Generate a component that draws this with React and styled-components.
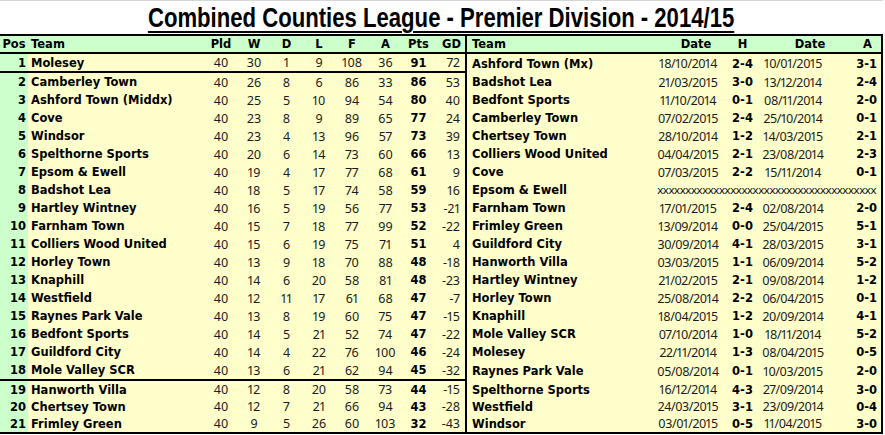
import React from 'react'
import styled, { createGlobalStyle } from 'styled-components'

const GREEN = '#ccffcc';
const CREAM = '#ffffcc';

const GlobalStyle = createGlobalStyle`
  body {
    margin: 0;
    background: #fff;
  }
`;

const Sheet = styled.div`
  width: 883px;
  font-family: "DejaVu Sans", "Liberation Sans", sans-serif;
  font-size: 11.5px;
  color: #000;
`;

const TitleBar = styled.div`
  height: 33px;
  border-top: 1px solid #d6d6d6;
  display: flex;
  justify-content: center;
`;

const Title = styled.h1`
  margin: 0;
  display: inline-block;
  font-family: "Liberation Sans", Arial, sans-serif;
  font-weight: 700;
  font-size: 28px;
  line-height: 33px;
  white-space: nowrap;
  transform: scaleX(0.79);
  text-decoration: underline;
  text-decoration-thickness: 2px;
  text-underline-offset: 4px;
`;

const Table = styled.div`
  border-top: 2px solid #000;
  border-right: 2px solid #000;
  border-bottom: 2px solid #000;
`;

const Row = styled.div`
  display: flex;
`;

const Left = styled.div`
  display: grid;
  grid-template-columns: 28px 176px 34px 32px 33px 32px 34px 33px 33px 30px;
  width: 465px;
  height: ${p => p.$h}px;
  background: ${p => (p.$head ? GREEN : CREAM)};
  border-bottom: ${p => (p.$rule ? '2px solid #000' : 'none')};
`;

const Right = styled.div`
  display: grid;
  grid-template-columns: 188px 72px 31px 74px 49px;
  flex: 1;
  background: ${p => (p.$head ? GREEN : CREAM)};
  border-left: 2px solid #000;
  border-bottom: ${p => (p.$rule ? '2px solid #000' : 'none')};
`;

const Cell = styled.div`
  display: flex;
  align-items: center;
  justify-content: ${p =>
    p.$align === 'left' ? 'flex-start' : p.$align === 'right' ? 'flex-end' : 'center'};
  padding-left: ${p => p.$pl || 0}px;
  padding-right: ${p => p.$pr || 0}px;
  font-weight: ${p => (p.$bold ? 700 : 400)};
  white-space: nowrap;
  overflow: hidden;
`;

const Num = styled(Cell)`
  font-family: "Noto Sans", "DejaVu Sans", sans-serif;
  font-size: 12.5px;
  font-variant-numeric: proportional-nums;
  color: #1a1a1a;
`;

const DateCell = styled(Num)`
  letter-spacing: -0.4px;
`;

const Pos = styled(Cell)`
  background: ${GREEN};
`;

const Crosses = styled.div`
  grid-column: 2 / 6;
  display: flex;
  align-items: center;
  padding-left: 2px;
  white-space: nowrap;
  font-size: 11px;
  letter-spacing: -0.9px;
  color: #1a1a1a;
`;

const table = [
  [1, 'Molesey', 40, 30, 1, 9, 108, 36, 91, 72],
  [2, 'Camberley Town', 40, 26, 8, 6, 86, 33, 86, 53],
  [3, 'Ashford Town (Middx)', 40, 25, 5, 10, 94, 54, 80, 40],
  [4, 'Cove', 40, 23, 8, 9, 89, 65, 77, 24],
  [5, 'Windsor', 40, 23, 4, 13, 96, 57, 73, 39],
  [6, 'Spelthorne Sports', 40, 20, 6, 14, 73, 60, 66, 13],
  [7, 'Epsom & Ewell', 40, 19, 4, 17, 77, 68, 61, 9],
  [8, 'Badshot Lea', 40, 18, 5, 17, 74, 58, 59, 16],
  [9, 'Hartley Wintney', 40, 16, 5, 19, 56, 77, 53, -21],
  [10, 'Farnham Town', 40, 15, 7, 18, 77, 99, 52, -22],
  [11, 'Colliers Wood United', 40, 15, 6, 19, 75, 71, 51, 4],
  [12, 'Horley Town', 40, 13, 9, 18, 70, 88, 48, -18],
  [13, 'Knaphill', 40, 14, 6, 20, 58, 81, 48, -23],
  [14, 'Westfield', 40, 12, 11, 17, 61, 68, 47, -7],
  [15, 'Raynes Park Vale', 40, 13, 8, 19, 60, 75, 47, -15],
  [16, 'Bedfont Sports', 40, 14, 5, 21, 52, 74, 47, -22],
  [17, 'Guildford City', 40, 14, 4, 22, 76, 100, 46, -24],
  [18, 'Mole Valley SCR', 40, 13, 6, 21, 62, 94, 45, -32],
  [19, 'Hanworth Villa', 40, 12, 8, 20, 58, 73, 44, -15],
  [20, 'Chertsey Town', 40, 12, 7, 21, 66, 94, 43, -28],
  [21, 'Frimley Green', 40, 9, 5, 26, 60, 103, 32, -43],
];

const results = [
  ['Ashford Town (Mx)', '18/10/2014', '2-4', '10/01/2015', '3-1'],
  ['Badshot Lea', '21/03/2015', '3-0', '13/12/2014', '2-4'],
  ['Bedfont Sports', '11/10/2014', '0-1', '08/11/2014', '2-0'],
  ['Camberley Town', '07/02/2015', '2-4', '25/10/2014', '0-1'],
  ['Chertsey Town', '28/10/2014', '1-2', '14/03/2015', '2-1'],
  ['Colliers Wood United', '04/04/2015', '2-1', '23/08/2014', '2-3'],
  ['Cove', '07/03/2015', '2-2', '15/11/2014', '0-1'],
  ['Epsom & Ewell'],
  ['Farnham Town', '17/01/2015', '2-4', '02/08/2014', '2-0'],
  ['Frimley Green', '13/09/2014', '0-0', '25/04/2015', '5-1'],
  ['Guildford City', '30/09/2014', '4-1', '28/03/2015', '3-1'],
  ['Hanworth Villa', '03/03/2015', '1-1', '06/09/2014', '5-2'],
  ['Hartley Wintney', '21/02/2015', '2-1', '09/08/2014', '1-2'],
  ['Horley Town', '25/08/2014', '2-2', '06/04/2015', '0-1'],
  ['Knaphill', '18/04/2015', '1-2', '20/09/2014', '4-1'],
  ['Mole Valley SCR', '07/10/2014', '1-0', '18/11/2014', '5-2'],
  ['Molesey', '22/11/2014', '1-3', '08/04/2015', '0-5'],
  ['Raynes Park Vale', '05/08/2014', '0-1', '10/03/2015', '2-0'],
  ['Spelthorne Sports', '16/12/2014', '4-3', '27/09/2014', '3-0'],
  ['Westfield', '24/03/2015', '3-1', '23/09/2014', '0-4'],
  ['Windsor', '03/01/2015', '0-5', '11/04/2015', '3-0'],
];

const rowHeight = pos => (pos === 1 ? 17 : pos > 18 ? 17 : 18);

export default function App() {
  return (
    <Sheet>
      <GlobalStyle />
      <TitleBar>
        <Title>Combined Counties League - Premier Division - 2014/15</Title>
      </TitleBar>
      <Table>
        <Row>
          <Left $head $rule $h={16}>
            <Cell $bold>Pos</Cell>
            <Cell $bold $align="left" $pl={3}>Team</Cell>
            <Cell $bold>Pld</Cell>
            <Cell $bold>W</Cell>
            <Cell $bold>D</Cell>
            <Cell $bold>L</Cell>
            <Cell $bold>F</Cell>
            <Cell $bold>A</Cell>
            <Cell $bold>Pts</Cell>
            <Cell $bold $align="right" $pr={4}>GD</Cell>
          </Left>
          <Right $head $rule>
            <Cell $bold $align="left" $pl={5}>Team</Cell>
            <Cell $bold $pl={10}>Date</Cell>
            <Cell $bold>H</Cell>
            <Cell $bold $pl={30}>Date</Cell>
            <Cell $bold $align="right" $pr={9}>A</Cell>
          </Right>
        </Row>
        {table.map((r, i) => {
          const [pos, team, pld, w, d, l, f, a, pts, gd] = r;
          const res = results[i];
          return (
            <Row key={pos}>
              <Left $rule={pos === 1 || pos === 18} $h={rowHeight(pos)}>
                <Pos $bold $align="right" $pr={2}>{pos}</Pos>
                <Cell $bold $align="left" $pl={3}>{team}</Cell>
                <Num>{pld}</Num>
                <Num>{w}</Num>
                <Num>{d}</Num>
                <Num>{l}</Num>
                <Num>{f}</Num>
                <Num>{a}</Num>
                <Cell $bold>{pts}</Cell>
                <Num $align="right" $pr={5}>{gd}</Num>
              </Left>
              <Right>
                <Cell $bold $align="left" $pl={5}>{res[0]}</Cell>
                {res.length > 1 ? (
                  <>
                    <DateCell $pr={6}>{res[1]}</DateCell>
                    <Cell $bold>{res[2]}</Cell>
                    <DateCell $pr={4}>{res[3]}</DateCell>
                    <Cell $bold $align="right" $pr={4}>{res[4]}</Cell>
                  </>
                ) : (
                  <Crosses>{'x'.repeat(39)}</Crosses>
                )}
              </Right>
            </Row>
          );
        })}
      </Table>
    </Sheet>
  )
}
